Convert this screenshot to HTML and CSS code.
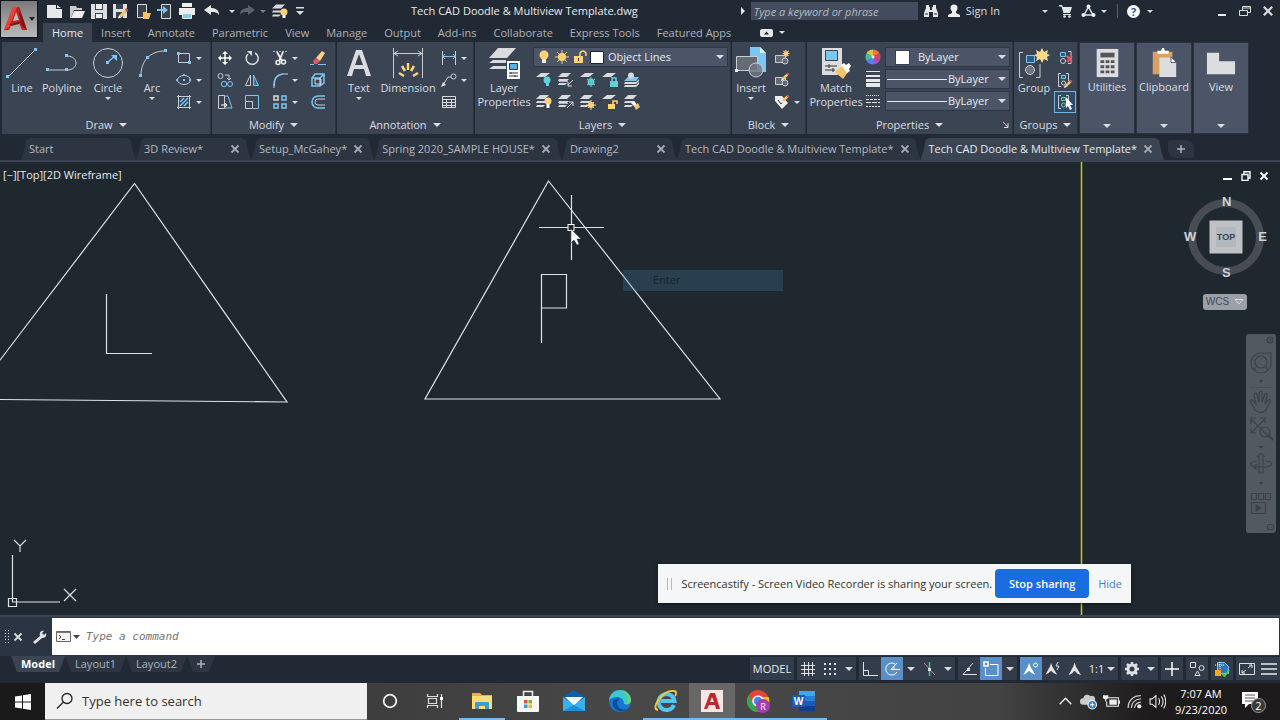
FILE: index.html
```html
<!DOCTYPE html>
<html lang="en">
<head>
<meta charset="utf-8">
<title>Tech CAD Doodle &amp; Multiview Template.dwg</title>
<link rel="stylesheet" href="styles.css">
</head>
<body>
<svg class="defs" aria-hidden="true">
  <symbol id="i-layers" viewBox="0 0 16 16"><path fill="#d8dadc" d="M4 1h9l-4 4H0zM1 7h10l-2 2H0zM1 11h8l-2 2H0z"/></symbol>
  <symbol id="i-x" viewBox="0 0 10 10"><path d="M1.500 1.500l7 7M8.500 1.500l-7 7" stroke="currentColor" stroke-width="1.800" fill="none"/></symbol>
  <symbol id="i-pencil" viewBox="0 0 10 10"><path fill="#f3c46b" d="M1 7l5-5 2 2-5 5z"/><path fill="#e05252" d="M6 2l1.500-1.500 2 2L8 4z"/><path fill="#fff" d="M1 7l2 2-3 1z"/></symbol>
  <symbol id="i-person" viewBox="0 0 32 32"><path d="M15 1l3 9 12 20-9-4-6-6-6 6-8 4L12 10z"/></symbol>
</svg>

<header class="titlebar">
  <button class="app-button" aria-label="Application menu">
    <svg width="24" height="28" viewBox="0 0 24 28"><path fill="#c4201f" d="M9 2h6l8 23h-5l-3-7H8l-3 7H0z"/><path fill="#e8423c" d="M9 2h4L5 22l-5 3z"/><path fill="#bcbdbf" d="M12 7l3 8-6 1z"/><path fill="#851414" d="M15 2l8 23-6-5zM5 19l13-3-3 3-8 2z"/></svg>
    <i class="caret dark"></i>
  </button>
  <nav class="quick" aria-label="Quick access">
    <button aria-label="New"><svg viewBox="0 0 16 16"><path fill="#e6e7e8" d="M1 2h9v4h6v9H1zM11 2l4 3h-4z"/></svg></button>
    <button aria-label="Open"><svg viewBox="0 0 16 16"><path fill="#c9cbcd" d="M1 3h6l1 2h5v2H5l-3 8H1z"/><path fill="#eee" d="M5 8h11l-3 7H2z"/></svg></button>
    <button aria-label="Save"><svg viewBox="0 0 16 16"><path fill="#dcdddf" d="M0 1h16v15H0z"/><path fill="#3a424d" d="M4 1h8v6H4zM4 10h8v6H4z"/><path fill="#eee" d="M5 1h6v5H5zM5 11h6v4H5z"/></svg></button>
    <button aria-label="Save as"><svg viewBox="0 0 16 16"><path fill="#dcdddf" d="M0 1h14v14H0z"/><path fill="#3a424d" d="M3 1h7v5H3zM3 9h7v6H3z"/><use href="#i-pencil" x="5" y="4" width="11" height="12"/></svg></button>
    <button aria-label="Open from web"><svg viewBox="0 0 16 16"><path fill="#3a424d" stroke="#ddd" d="M2.500 1.500h9v13h-9z"/><path fill="#f3c46b" d="M8 9h3l1 1h4l-2 6H8z"/></svg></button>
    <button aria-label="Save to web"><svg viewBox="0 0 16 16"><path fill="#3a424d" stroke="#ddd" d="M4.500 1.500h9v14h-9z"/><path fill="#7cc6f2" d="M0 6h6V3l5 4-5 4V8H0z"/></svg></button>
    <button aria-label="Plot"><svg viewBox="0 0 16 16"><path fill="#eee" d="M3 0h10v4H3zM0 5h16v7H0z"/><path fill="#8ac9f4" stroke="#eee" d="M3.500 10.500h9v5h-9z"/></svg></button>
    <button aria-label="Undo"><svg viewBox="0 0 16 16"><path fill="#e6e7e8" d="M0 7l7-5v3c5 0 8 2 8 7-2-3-4-3-8-3v3z"/></svg></button>
    <button class="narrow" aria-label="Undo list"><i class="caret"></i></button>
    <button aria-label="Redo"><svg viewBox="0 0 16 16"><path fill="#5a626c" d="M16 7L9 2v3c-5 0-8 2-8 7 2-3 4-3 8-3v3z"/></svg></button>
    <button class="narrow" aria-label="Redo list"><i class="caret dim"></i></button>
    <button aria-label="Layer state"><svg viewBox="0 0 16 16"><use href="#i-layers" width="16" height="17"/><circle cx="12" cy="9" r="3.500" fill="#ffd27a"/><path fill="#fff" d="M10.500 12h3v3h-3z"/></svg></button>
    <button aria-label="Customize"><svg viewBox="0 0 16 16"><path fill="#ddd" d="M4 4h8v1.500H4zM4 8h8l-4 4z"/></svg></button>
  </nav>
  <h1 class="doc-title">Tech CAD Doodle &amp; Multiview Template.dwg</h1>
  <div class="info">
    <i class="caret right"></i>
    <input class="keyword" type="text" placeholder="Type a keyword or phrase" aria-label="Type a keyword or phrase">
    <button aria-label="Search"><svg width="14" height="14" viewBox="0 0 14 14"><path fill="#e6e7e8" d="M2 1h3v2h1v3h2V3h1V1h3v3l2 5v4H9V8H5v5H0V9l2-5z"/><path stroke="#222a33" d="M1 10h3M10 10h3"/></svg></button>
    <button class="signin"><svg width="14" height="14" viewBox="0 0 14 14"><circle cx="7" cy="4" r="3.500" fill="#eee"/><path fill="#eee" d="M5 7h4v2l4 2v2H1v-2l4-2z"/></svg>Sign In</button>
    <button aria-label="Account list"><i class="caret"></i></button>
    <button aria-label="App Store"><svg width="14" height="14" viewBox="0 0 14 14"><path fill="#e6e7e8" d="M0 1h3l1 2h9l-2 6H4.500L2.500 2.500H0zM4 10h8v1H4z"/><circle cx="5.500" cy="12.500" r="1.300" fill="#eee"/><circle cx="10.500" cy="12.500" r="1.300" fill="#eee"/></svg></button>
    <button class="cloud" aria-label="Cloud"><svg width="15" height="14" viewBox="0 0 15 14"><path d="M7.500 3L3 11h9z" fill="none" stroke="#dfe2ea" stroke-width="1.500"/><circle cx="7.500" cy="2.500" r="2" fill="#eee"/><circle cx="2.500" cy="11" r="2" fill="#eee"/><circle cx="12.500" cy="11" r="2" fill="#eee"/></svg><i class="caret"></i></button>
    <button class="help" aria-label="Help"><b>?</b><i class="caret"></i></button>
  </div>
  <div class="window-buttons">
    <button aria-label="Minimize"><svg width="12" height="12" viewBox="0 0 12 12"><path d="M2 10h8" stroke="#eee" stroke-width="2"/></svg></button>
    <button aria-label="Restore"><svg width="12" height="12" viewBox="0 0 12 12"><path fill="none" stroke="#ddd" d="M.5 5.500h8v5h-8zM3.500 5V1.500h8v6H9M4 3h7"/></svg></button>
    <button aria-label="Close"><svg width="12" height="12"><use href="#i-x" width="12" height="12"/></svg></button>
  </div>
</header>

<nav class="ribbon-tabs">
  <button class="current">Home</button><button>Insert</button><button>Annotate</button><button>Parametric</button><button>View</button><button>Manage</button><button>Output</button><button>Add-ins</button><button>Collaborate</button><button>Express Tools</button><button>Featured Apps</button>
  <button class="min-ribbon" aria-label="Minimize ribbon"><svg width="13" height="8" viewBox="0 0 13 8"><rect width="13" height="8" rx="2" fill="#e6e7e8"/><path fill="#222" d="M4 5.500h5L6.500 2.500z"/></svg><i class="caret"></i></button>
</nav>

<main class="ribbon">
  <section class="panel draw">
    <div class="tools">
      <button class="big"><svg viewBox="0 0 32 32"><path d="M2 30L29 3" stroke="#c9cdd3"/><path fill="#7cc6f2" d="M0 28h3v3H0zM28 1h3v3h-3z"/></svg>Line</button>
      <button class="big"><svg viewBox="0 0 32 32"><path d="M2 23h19c12 0 12-14 0-14" fill="none" stroke="#c9cdd3"/><path fill="#7cc6f2" d="M0 21h3v3H0zM19 21h3v3h-3zM19 7h3v3h-3z"/></svg>Polyline</button>
      <button class="big"><svg viewBox="0 0 32 32"><circle cx="16" cy="16" r="14.500" fill="none" stroke="#c9cdd3"/><path fill="#7cc6f2" d="M14 14h3v3h-3zM19 8h6v6z"/><path d="M16 15l7-6" stroke="#7cc6f2" stroke-width="1.500"/></svg>Circle<i class="caret"></i></button>
      <button class="big"><svg viewBox="0 0 32 32"><path d="M5 28C5 14 14 4 29 4" fill="none" stroke="#c9cdd3"/><path fill="#7cc6f2" d="M3 27h3v3H3zM10 9h3v3h-3zM28 2h3v3h-3z"/></svg>Arc<i class="caret"></i></button>
      <div class="grid one">
        <button class="split" aria-label="Rectangle"><svg viewBox="0 0 16 16"><path d="M2.500 3.500h11v9h-11z" fill="none" stroke="#c9cdd3"/><path fill="#7cc6f2" d="M1 2h3v3H1zM12 11h3v3h-3z"/></svg><i class="caret"></i></button>
        <button class="split" aria-label="Ellipse"><svg viewBox="0 0 16 16"><ellipse cx="8" cy="8" rx="6.500" ry="4.500" fill="none" stroke="#c9cdd3"/><path fill="#7cc6f2" d="M7 7h2v2H7zM7 2h2v2H7zM13 7h2v2h-2zM0 7h2v2H0z"/></svg><i class="caret"></i></button>
        <button class="split" aria-label="Hatch"><svg viewBox="0 0 16 16"><path d="M2.500 1v14M13.500 1v14M1 2.500h14M1 13.500h14" stroke="#c9cdd3"/><path d="M4 8l4-4M4 12l8-8M8 12l4-4" stroke="#7cc6f2" stroke-width="1.500"/></svg><i class="caret"></i></button>
      </div>
    </div>
    <footer>Draw <i class="caret big-caret"></i></footer>
  </section>

  <section class="panel modify">
    <div class="tools">
      <div class="grid four">
        <button aria-label="Move"><svg viewBox="0 0 16 16"><path d="M8 3v10M3 8h10" stroke="#fff" stroke-width="1.500"/><path fill="#fff" d="M8 1l3 3H5zM8 15l3-3H5zM1 8l3-3v6zM15 8l-3-3v6z"/></svg></button>
        <button aria-label="Rotate"><svg viewBox="0 0 16 16"><path d="M11 3A6 6 0 1 1 4 4" fill="none" stroke="#d8dadc" stroke-width="1.500"/><path fill="#d8dadc" d="M3 1h5v5z"/></svg></button>
        <button class="split" aria-label="Trim"><svg viewBox="0 0 16 16"><path d="M1 1.500h14" stroke="#7cc6f2" stroke-dasharray="2 1"/><path d="M5 2l5 9M11 2L7 11" stroke="#eee" stroke-width="1.800"/><circle cx="6" cy="12.500" r="2" fill="none" stroke="#eee" stroke-width="1.500"/><circle cx="11.500" cy="12" r="2" fill="none" stroke="#eee" stroke-width="1.500"/></svg><i class="caret"></i></button>
        <button aria-label="Erase"><svg viewBox="0 0 16 16"><path fill="#ffd28c" d="M6 8l6-7 3 2-5 8z"/><path fill="#e05a68" d="M3 11l3-3 4 3-3 3H4z"/><path d="M0 14.500h4M8 14.500h8" stroke="#7cc6f2"/></svg></button>
        <button aria-label="Copy"><svg viewBox="0 0 16 16"><g fill="none" stroke="#c9cdd3"><circle cx="3.500" cy="4" r="2.500"/><path d="M8 3h4v5M10 6l2 2 2-2"/><g stroke="#7cc6f2"><circle cx="7" cy="12" r="2.700"/><circle cx="13" cy="12" r="2.500"/></g></g></svg></button>
        <button aria-label="Mirror"><svg viewBox="0 0 16 16"><path d="M6.500 3v10.500h-5z" fill="none" stroke="#c9cdd3"/><path d="M9.500 3v10.500h5z" fill="#2f6fa5" stroke="#7cc6f2"/></svg></button>
        <button class="split" aria-label="Fillet"><svg viewBox="0 0 16 16"><path d="M2 14C2 6 5 2.500 11 2" fill="none" stroke="#7cc6f2" stroke-width="1.500"/><path d="M11 2h5M2 12v4" stroke="#c9cdd3"/></svg><i class="caret"></i></button>
        <button aria-label="Explode"><svg viewBox="0 0 16 16"><path d="M2 6h8v8H2zM2 6l3-4h9v9l-4 3M10 6l4-4" fill="none" stroke="#7cc6f2" stroke-width="1.500"/><path d="M5 7h6v5H5z" fill="none" stroke="#ddd"/></svg></button>
        <button aria-label="Stretch"><svg viewBox="0 0 16 16"><path d="M1.500 1.500h6v13h-6z" fill="none" stroke="#c9cdd3"/><path d="M8 2h3l4 12H8" fill="none" stroke="#7cc6f2"/><path d="M4 11h6M8 9l2 2-2 2" fill="none" stroke="#fff"/></svg></button>
        <button aria-label="Scale"><svg viewBox="0 0 16 16"><path d="M1.500 7V1.500h13v13H9" fill="none" stroke="#7cc6f2"/><path d="M1.500 7.500h7v7h-7z" fill="none" stroke="#c9cdd3"/></svg></button>
        <button class="split" aria-label="Array"><svg viewBox="0 0 16 16"><g fill="none" stroke-width="1.500" stroke="#7cc6f2"><path d="M2 2h4v4H2z" stroke="#ddd"/><path d="M10 2h4v4h-4zM2 10h4v4H2zM10 10h4v4h-4z"/></g></svg><i class="caret"></i></button>
        <button aria-label="Offset"><svg viewBox="0 0 16 16"><path d="M15 2H8a6 6 0 0 0 0 12h7" fill="none" stroke="#7cc6f2" stroke-width="1.500"/><path d="M15 5H8a3 3 0 0 0 0 6h7" fill="none" stroke="#c9cdd3"/></svg></button>
      </div>
    </div>
    <footer>Modify <i class="caret big-caret"></i></footer>
  </section>

  <section class="panel annotation">
    <div class="tools">
      <button class="big"><svg viewBox="0 0 32 32"><path fill="#d9dbdf" fill-rule="evenodd" d="M13 3h6l9 26h-5l-2-7H11l-2 7H4zM12 18h8l-4-11z"/></svg>Text<i class="caret"></i></button>
      <button class="big"><svg viewBox="0 0 32 32"><path d="M1.500 1v30M30.500 1v30M3 6.500h26M6 4L2 6.500 6 9M26 4l4 2.500L26 9" fill="none" stroke="#c9cdd3"/><g stroke="#ffd27a" stroke-width="2.500"><path d="M7 26l5 3M10 19l3 5M16 16v7M22 19l-3 5M26 26l-5 3"/></g></svg>Dimension</button>
      <div class="grid one">
        <button class="split" aria-label="Linear"><svg viewBox="0 0 16 16"><path d="M1.500 1v14M14.500 1v14" stroke="#c9cdd3"/><path d="M2 6.500h12M4 4L2 6.500 4 9M12 4l2 2.500L12 9" fill="none" stroke="#7cc6f2"/></svg><i class="caret"></i></button>
        <button class="split" aria-label="Leader"><svg viewBox="0 0 16 16"><circle cx="12.500" cy="4.500" r="2.500" fill="none" stroke="#c9cdd3"/><path d="M10 5H7L2 13" fill="none" stroke="#c9cdd3"/><path fill="#ddd" d="M0 15l2-5 3 3z"/></svg><i class="caret"></i></button>
        <button aria-label="Table"><svg viewBox="0 0 16 16"><path d="M1.500 2.500h13v11h-13zM1 5.500h14M1 8.500h14M1 11.500h14M5.500 5v9M10.500 5v9" fill="none" stroke="#d8dadc"/></svg></button>
      </div>
    </div>
    <footer>Annotation <i class="caret big-caret"></i></footer>
  </section>

  <section class="panel layers">
    <div class="tools">
      <button class="big"><svg viewBox="0 0 32 32"><path fill="#d9dbdf" d="M10 1h18l-9 10H1zM5 13h13v3H1zM5 19h13v3H1z"/><path fill="#fff" d="M19 14h13v18H19z"/><path fill="#5aaee8" stroke="#334" d="M21.500 16.500h8v6h-8z"/><path stroke="#333" d="M21 26h9M21 29h9M23 25v2M27 28v2"/></svg>Layer<br>Properties</button>
      <div class="stack">
        <div class="combo layer-combo">
          <svg width="66" height="16" viewBox="0 0 66 16"><circle cx="7" cy="6" r="4.500" fill="#ffd27a"/><path fill="#eee" d="M5 10h4v4H5z"/><circle cx="25" cy="8" r="4" fill="#ffd27a"/><path d="M25 1v14M18 8h14M20 3l10 10M30 3L20 13" stroke="#ffd27a"/><path fill="#ffd27a" d="M37 7h9v7h-9z"/><path d="M43 8V4q3-4 6 0v3" fill="none" stroke="#ffd27a" stroke-width="1.500"/><path fill="#333" d="M41 9h1v3h-1z"/><path fill="#fff" stroke="#1e252e" d="M53.500 2.500h13v12h-13z"/></svg>
          <select aria-label="Layer"><option>Object Lines</option></select><i class="caret big-caret"></i>
        </div>
        <div class="layer-grid">
          <button aria-label="Off"><svg viewBox="0 0 16 16"><path fill="#d8dadc" d="M5 1h9l-5 4H0z"/><circle cx="11" cy="8" r="3.500" fill="#5fd3d8"/><path fill="#5fd3d8" d="M10 11h3v3h-3z"/></svg></button>
          <button aria-label="Isolate"><svg viewBox="0 0 16 16"><use href="#i-layers" width="16" height="16"/><path d="M1 9.500h9" stroke="#7cc6f2"/><path d="M15 8l-5 5M10 10v4h4" stroke="#ddd" fill="none"/></svg></button>
          <button aria-label="Freeze"><svg viewBox="0 0 16 16"><path fill="#d8dadc" d="M5 1h9l-5 4H0z"/><circle cx="11" cy="10" r="2.500" fill="none" stroke="#5fd3d8" stroke-width="2"/><path d="M11 5v10M7 7l8 6M15 7l-8 6" stroke="#5fd3d8"/></svg></button>
          <button aria-label="Lock"><svg viewBox="0 0 16 16"><path fill="#d8dadc" d="M5 1h9l-5 4H0z"/><path fill="#5fd3d8" d="M8 9h8v6H8z"/><path d="M10 9V6h4v3" fill="none" stroke="#5fd3d8" stroke-width="1.500"/></svg></button>
          <button aria-label="Make current"><svg viewBox="0 0 16 16"><path fill="#7cc6f2" d="M4 5h11l-3 4H0z"/><circle cx="7" cy="3.500" r="3" fill="#d8dadc"/><path fill="#d8dadc" d="M1 10h11l3-3v2l-3 3H0zM1 13h11l3-3v2l-3 3H0z"/></svg></button>
          <button aria-label="All on"><svg viewBox="0 0 16 16"><use href="#i-layers" width="16" height="16"/><circle cx="12" cy="7" r="3.500" fill="#ffd27a"/><path fill="#fff" d="M10.500 10h3v4h-3z"/></svg></button>
          <button aria-label="Unisolate"><svg viewBox="0 0 16 16"><use href="#i-layers" width="16" height="16"/><path d="M1 9.500h9" stroke="#7cc6f2"/><path d="M9 14l6-6M11 8h4v4" stroke="#ddd" fill="none"/></svg></button>
          <button aria-label="Thaw"><svg viewBox="0 0 16 16"><use href="#i-layers" width="16" height="16"/><circle cx="11" cy="11" r="3" fill="#ffd27a"/><path d="M11 6v10M6 11h10M8 8l6 6M14 8l-6 6" stroke="#ffd27a"/></svg></button>
          <button aria-label="Unlock"><svg viewBox="0 0 16 16"><path fill="#d8dadc" d="M5 1h9l-5 4H0z"/><path fill="#ffd27a" d="M6 10h7v5H6z"/><path d="M11 10V7h4v3" fill="none" stroke="#ffd27a" stroke-width="1.500"/></svg></button>
          <button aria-label="Match layer"><svg viewBox="0 0 16 16"><use href="#i-layers" width="16" height="16"/><path fill="#fff" d="M7 9l3-2 4 5-2 2z"/><path fill="#f3c46b" d="M10 12l4-3 2 4-4 3z"/></svg></button>
        </div>
      </div>
    </div>
    <footer>Layers <i class="caret big-caret"></i></footer>
  </section>

  <section class="panel block">
    <div class="tools">
      <button class="big"><svg viewBox="0 0 32 32"><path fill="#7cc6f2" d="M15 0h10l6 6v19H15z"/><path fill="#d7efff" d="M25 0l6 6h-6z"/><path fill="#656b75" stroke="#c9cdd3" d="M1.500 9.500h21v14h-21z"/><circle cx="21" cy="23" r="7" fill="#707884" fill-opacity=".8" stroke="#c9cdd3"/><path fill="#eee" d="M0 22h3v3H0z"/></svg>Insert<i class="caret"></i></button>
      <div class="grid one">
        <button aria-label="Create block"><svg viewBox="0 0 16 16"><path fill="#656b75" stroke="#c9cdd3" d="M1.500 5.500h10v7h-10z"/><circle cx="11" cy="11" r="3" fill="#656b75" stroke="#c9cdd3"/><path d="M12 0v7M8.500 3.500h7M9.500 1l5 5M14.500 1l-5 5" stroke="#ffd27a" stroke-width="1.200"/></svg></button>
        <button aria-label="Edit block"><svg viewBox="0 0 16 16"><path fill="#656b75" stroke="#c9cdd3" d="M1.500 5.500h10v7h-10z"/><circle cx="11" cy="11" r="3" fill="#656b75" stroke="#c9cdd3"/><use href="#i-pencil" x="7" y="0" width="9" height="9"/></svg></button>
        <button class="split" aria-label="Edit attributes"><svg viewBox="0 0 16 16"><path fill="#eee" d="M1 2h7l6 7-6 6-7-8z"/><path d="M4 6l3 4 2-3" stroke="#333" fill="none"/><use href="#i-pencil" x="7" y="0" width="9" height="9"/></svg><i class="caret"></i></button>
      </div>
    </div>
    <footer>Block <i class="caret big-caret"></i></footer>
  </section>

  <section class="panel properties">
    <div class="tools">
      <button class="big"><svg viewBox="0 0 32 32"><path fill="#dcdddf" d="M2 1h20v27H2z"/><path fill="#7cc6f2" stroke="#3b4453" d="M5.500 3.500h12v10h-12z"/><path d="M5 19h12M5 23h10M9 17v4M13 21v4" stroke="#333"/><path fill="#f3c46b" d="M15 25l7-6 6 6-5 7z"/><path fill="#fff" d="M21 18l3-2 2 2 3-2 2 3-2 3 1 2-3 2z"/></svg>Match<br>Properties</button>
      <div class="prop-rows">
        <svg width="16" height="16" viewBox="0 0 16 16"><path fill="#f0763f" d="M8 8V0.500a7.500 7.500 0 0 1 6.500 3.750z"/><path fill="#d9455f" d="M8 8l6.500-3.750a7.500 7.500 0 0 1 0 7.500z"/><path fill="#a94fd0" d="M8 8l6.500 3.750A7.500 7.500 0 0 1 8 15.500z"/><path fill="#5b7ff0" d="M8 8v7.500a7.500 7.500 0 0 1-6.500-3.750z"/><path fill="#3fc0a0" d="M8 8l-6.500 3.750a7.500 7.500 0 0 1 0-7.500z"/><path fill="#d2c648" d="M8 8L1.500 4.250A7.500 7.500 0 0 1 8 .5z"/><circle cx="8" cy="8" r="1.500" fill="#eee"/></svg>
        <div class="combo"><span class="swatch"></span><select class="color" aria-label="Object color"><option>ByLayer</option></select><i class="caret big-caret"></i></div>
        <svg width="16" height="16" viewBox="0 0 16 16"><path fill="#e6e7e8" d="M1 0h14v1H1zM1 4h14v2H1zM1 8h14v3H1zM1 12h14v4H1z"/></svg>
        <div class="combo"><span class="line"></span><select aria-label="Lineweight"><option>ByLayer</option></select><i class="caret big-caret"></i></div>
        <svg width="16" height="16" viewBox="0 0 16 16"><g stroke="#e6e7e8"><path d="M1 2.500h14" stroke-dasharray="1 1"/><path d="M1 6.500h14" stroke-dasharray="3 1"/><path d="M1 9.500h14" stroke-dasharray="5 1"/><path d="M1 13.500h14" stroke-dasharray="2 1"/></g></svg>
        <div class="combo"><span class="line"></span><select aria-label="Linetype"><option>ByLayer</option></select><i class="caret big-caret"></i></div>
      </div>
    </div>
    <footer>Properties <i class="caret big-caret"></i><svg class="launcher" width="8" height="8" viewBox="0 0 8 8"><path d="M1 1l5 5M6 2v4.500H2" stroke="#ddd" fill="none"/></svg></footer>
  </section>

  <section class="panel groups">
    <div class="tools">
      <button class="big"><svg viewBox="0 0 32 32"><path d="M5 5.500H1.500v25H5M18 30.500h4V17" fill="none" stroke="#c9cdd3"/><path fill="#2f5b80" stroke="#7cc6f2" d="M8.500 8.500h8v7h-8z"/><circle cx="12" cy="23" r="4.500" fill="#70757e" stroke="#c9cdd3"/><path fill="#ffd98a" d="M24 1l2 4 4-2-1 4 3 1-3 2 1 4-4-2-2 4-2-4-4 2 1-4-3-2 3-1-1-4 4 2z"/></svg>Group</button>
      <div class="grid one">
        <button aria-label="Ungroup"><svg viewBox="0 0 16 16"><path d="M11 1.500h3v12h-3" fill="none" stroke="#c9cdd3"/><path fill="#2f5b80" stroke="#7cc6f2" d="M3.500 2.500h5v4h-5z"/><circle cx="6" cy="11" r="2.500" fill="none" stroke="#c9cdd3"/><path d="M10 6l5 6M15 6l-5 6" stroke="#ee5560" stroke-width="2"/></svg></button>
        <button aria-label="Group edit"><svg viewBox="0 0 16 16"><path d="M4 1.500H1.500v13H4M9 1.500h2.500V9" fill="none" stroke="#c9cdd3"/><path fill="#2f5b80" stroke="#7cc6f2" d="M4.500 3.500h4v3h-4z"/><circle cx="6.500" cy="11" r="2" fill="none" stroke="#c9cdd3"/><use href="#i-pencil" x="7" y="7" width="9" height="9"/></svg></button>
        <button class="active" aria-label="Group selection"><svg viewBox="0 0 16 16"><path d="M4 1.500H1.500v13H4M9 1.500h2.500V9" fill="none" stroke="#c9cdd3"/><path fill="#2a6b50" stroke="#5fd39a" d="M4.500 3.500h4v3h-4z"/><circle cx="6.500" cy="11" r="2" fill="none" stroke="#5fd39a"/><path fill="#fff" d="M9 3v11l2-2 2 4 2-1-2-4h3z"/></svg></button>
      </div>
    </div>
    <footer>Groups <i class="caret big-caret"></i></footer>
  </section>

  <button class="collapsed"><svg viewBox="0 0 32 32"><path fill="#dcdddf" d="M5 1h23v30H5z"/><path fill="#555" d="M9 5h15v5H9z"/><g fill="#555"><path d="M9 13h4v3H9zM14.500 13h4v3h-4zM20 13h4v3h-4zM9 18.500h4v3H9zM14.500 18.500h4v3h-4zM20 18.500h4v3h-4zM9 24h4v3H9zM14.500 24h4v3h-4zM20 24h4v3h-4z"/></g></svg>Utilities<i class="caret big-caret"></i></button>
  <button class="collapsed"><svg viewBox="0 0 32 32"><path fill="#d9a05f" d="M4 4h21v24H4z"/><path fill="#fff" d="M9 3h4l1-3h2l1 3h4v3H9z"/><path fill="#dcdddf" d="M11 10h12l6 6v15H11z"/><path fill="#fff" stroke="#4b5567" d="M23.500 9.500v6h6z"/></svg>Clipboard<i class="caret big-caret"></i></button>
  <button class="collapsed"><svg viewBox="0 0 32 32"><path fill="#dcdddf" d="M1 5h13v9h17v14H1z"/></svg>View<i class="caret big-caret"></i></button>
</main>

<nav class="doc-tabs">
  <div class="doc-tab first"><button>Start</button></div>
  <div class="doc-tab"><button>3D Review*</button><button class="close" aria-label="Close"><svg><use href="#i-x"/></svg></button></div>
  <div class="doc-tab"><button>Setup_McGahey*</button><button class="close" aria-label="Close"><svg><use href="#i-x"/></svg></button></div>
  <div class="doc-tab"><button>Spring 2020_SAMPLE HOUSE*</button><button class="close" aria-label="Close"><svg><use href="#i-x"/></svg></button></div>
  <div class="doc-tab"><button>Drawing2</button><button class="close" aria-label="Close"><svg><use href="#i-x"/></svg></button></div>
  <div class="doc-tab"><button>Tech CAD Doodle &amp; Multiview Template*</button><button class="close" aria-label="Close"><svg><use href="#i-x"/></svg></button></div>
  <div class="doc-tab current"><button>Tech CAD Doodle &amp; Multiview Template*</button><button class="close" aria-label="Close"><svg><use href="#i-x"/></svg></button></div>
  <button class="add-tab" aria-label="New tab"><svg width="10" height="10"><path d="M5 1v8M1 5h8" stroke="#aab0b8" stroke-width="1.500"/></svg></button>
</nav>

<section class="canvas">
  <svg class="drawing" width="100%" height="100%">
    <g fill="none" stroke="#dfe2e5" stroke-width="1.200">
      <path d="M-6 206L134.500 21.500 287 240 0 237.500M106.500 132v59.500H152"/>
      <path d="M548.500 19L425 237h295zM541.500 181v-68.500h25v33.500h-25"/>
      <path d="M539 65.500h65M571.500 33v65"/>
    </g>
    <path d="M1081.500 0v460" stroke="#c8c814" stroke-width="1.500"/>
    <rect x="568" y="62.500" width="6" height="6" fill="#20272e" stroke="#fff"/>
  </svg>
  <div class="view-label">[−][Top][2D Wireframe]</div>
  <div class="ghost-menu">Enter</div>
  <svg class="cursor" width="12" height="17" viewBox="0 0 12 17"><path fill="#fff" stroke="#333" stroke-width=".5" d="M1 0v14l3-3 3 5 2-1-2-5h4z"/></svg>
  <svg class="ucs" width="80" height="76" viewBox="0 0 80 76"><path fill="none" stroke="#dfe2e5" stroke-width="1.200" d="M12.500 20v47H60M8.500 63.500h8v8h-8zM14 5l6 6 6-6M20 11v6M64 54l12 12M76 54L64 66"/></svg>
  <div class="view-controls">
    <button aria-label="Minimize view"><svg width="10" height="10"><path d="M0 8h9" stroke="#fff" stroke-width="2"/></svg></button>
    <button aria-label="Restore view"><svg width="10" height="10"><path d="M1 3.500h6v6H1zM3 3V.8h6V7H7" fill="none" stroke="#fff" stroke-width="1.400"/></svg></button>
    <button aria-label="Close view"><svg width="10" height="10"><use href="#i-x"/></svg></button>
  </div>
  <div class="viewcube">
    <svg width="84" height="84" viewBox="0 0 84 84"><circle cx="42" cy="42" r="34" fill="none" stroke="#474c55" stroke-width="8"/><path fill="#bfc1c5" d="M25.500 25.500h33v33h-33z"/><path fill="#b2b8c0" d="M32 32h20v20H32z"/></svg>
    <span class="n">N</span><span class="w">W</span><span class="e">E</span><span class="s">S</span><button class="top">TOP</button>
  </div>
  <button class="wcs">WCS <svg width="10" height="6" viewBox="0 0 10 6"><path d="M1 .5h8L5 5z" fill="none" stroke="#d6d8dc"/></svg></button>
  <svg class="navbar" width="30" height="199" viewBox="0 0 30 199">
    <rect width="30" height="199" rx="3" fill="#535a5f"/>
    <g fill="none" stroke="#3b4248" stroke-width="1.200">
      <circle cx="24" cy="6" r="3"/><path d="M22.500 4.500l3 3M25.500 4.500l-3 3"/>
      <path d="M25 20v9a10 10 0 1 1-10-10h10z"/><circle cx="15" cy="28" r="6"/><path d="M11 32l-3 4M19 32l3 4"/>
      <path d="M9 76c-2-6-6-8-4-10 2-1 4 3 5 4l-2-9c1-3 3-2 3 0l2 7V59c1-2 3-2 3 0v9l3-8c2-1 3 0 2 2l-2 8 3-4c2-1 3 0 2 2l-4 8q-5 5-11 0z"/>
      <path d="M5 85l18 18M19 85L5 99M5 90v-6h5M14 84h5v5M5 94v5h5"/><circle cx="19" cy="98" r="5"/><path d="M22 101l5 5" stroke-width="2.500"/>
      <path d="M13 139v-18l-2 2 4-4 4 4-2-2v18zM11 127c-8 1-9 5 0 6h10c8-2 5-6-2-6M11 130l-3 3 3 3"/>
      <path d="M5.500 159.500h5v6h-5zM12.500 159.500h5v6h-5zM19.500 159.500h5v6h-5zM5.500 168.500h14v11h-14z"/><path d="M10 171v6l5-3z" fill="#3b4248"/>
      <rect x="21.500" y="190.500" width="6" height="5" rx="2"/><path d="M23 193h3M4 53.500h22" stroke="#485056"/>
    </g>
    <path fill="#343b41" d="M13 46h4l-2 3zM13 112h4l-2 3zM13 148h4l-2 3z"/>
  </svg>
  <div class="share">
    <i class="grip"></i>
    <p>Screencastify - Screen Video Recorder is sharing your screen.</p>
    <button>Stop sharing</button>
    <a href="#hide">Hide</a>
  </div>
</section>

<section class="command">
  <i class="dots"></i>
  <button aria-label="Close command line"><svg width="10" height="10"><use href="#i-x"/></svg></button>
  <button aria-label="Customize"><svg width="14" height="14" viewBox="0 0 14 14"><path fill="#dfe1e4" d="M0 12l7-6c-1-3 1-6 4-5L9 3l2 2 2-2c1 3-1 5-4 5l-7 6z"/></svg></button>
  <div class="command-box">
    <svg width="24" height="12" viewBox="0 0 24 12"><path fill="#f4f4f4" stroke="#666" d="M.5.500h14v10H.5z"/><path stroke="#777" d="M0 1.500h15"/><path d="M3 4l2 2-2 2M6 8.500h3" fill="none" stroke="#444"/><path fill="#444" d="M17 4h7l-3.500 4z"/></svg>
    <input type="text" placeholder="Type a command" aria-label="Command">
  </div>
</section>

<footer class="statusbar">
  <nav class="layouts">
    <button class="current">Model</button><button>Layout1</button><button>Layout2</button><button class="plus" aria-label="New layout"><svg width="10" height="10"><path d="M5 1v8M1 5h8" stroke="#aab0b8" stroke-width="1.500"/></svg></button>
  </nav>
  <div class="modes">
    <div><button class="text">MODEL</button></div>
    <div><button aria-label="Grid"><svg viewBox="0 0 16 16"><path d="M4.500 1v14M8.500 1v14M12.500 1v14M1 4.500h14M1 8.500h14M1 12.500h14" stroke="#dfe1e4"/></svg></button><button aria-label="Snap"><svg viewBox="0 0 16 16"><g stroke="#dfe1e4" stroke-width="2" stroke-dasharray="2 3"><path d="M2 3h12M2 8h12M2 13h12"/></g></svg></button><button class="narrow" aria-label="Snap list"><i class="caret big-caret"></i></button></div>
    <div><button aria-label="Ortho"><svg viewBox="0 0 16 16"><path d="M1.500 1v13.500H16M1.500 9.500h5v5" fill="none" stroke="#dfe1e4"/></svg></button><button class="on" aria-label="Polar"><svg viewBox="0 0 16 16"><path d="M13 11A6 6 0 1 1 11 3M7 8.500h9M7 8.500L13 2M10 5.500v3" fill="none" stroke="#fff"/></svg></button><button class="narrow" aria-label="Polar list"><i class="caret big-caret"></i></button><button aria-label="Isodraft"><svg viewBox="0 0 16 16"><path d="M3 2l11 12" stroke="#d87890"/><path d="M8.500 1v14" stroke="#56b98a" stroke-width="1.500"/><path fill="#ddd" d="M7 7h3v3H7z"/></svg></button><button class="narrow" aria-label="Isodraft list"><i class="caret big-caret"></i></button></div>
    <div><button aria-label="Tracking"><svg viewBox="0 0 16 16"><path d="M12 2L2 13.500h14" fill="none" stroke="#dfe1e4"/><path fill="#dfe1e4" d="M6 7h3v3H6z"/></svg></button><button class="on" aria-label="Object snap"><svg viewBox="0 0 16 16"><path d="M7 3.500h8v11H2.500V7" fill="none" stroke="#fff"/><path d="M1 1h4v4H1z" fill="none" stroke="#fff" stroke-width="1.500"/></svg></button><button class="narrow" aria-label="Object snap list"><i class="caret big-caret"></i></button></div>
    <div><button class="on" aria-label="Annotation visibility"><svg viewBox="0 0 16 16"><use href="#i-person" width="13" height="16" fill="#fff"/><circle cx="12.500" cy="4" r="2" fill="none" stroke="#fff"/></svg></button><button aria-label="Auto scale"><svg viewBox="0 0 16 16"><use href="#i-person" width="13" height="16" fill="#dfe1e4"/><path d="M13 1l-2 4h3l-2 4" stroke="#dfe1e4" fill="none"/></svg></button><button aria-label="Annotation scale"><svg viewBox="0 0 16 16"><use href="#i-person" x="1" width="14" height="16" fill="#dfe1e4"/></svg></button><button class="text scale">1:1<i class="caret big-caret"></i></button></div>
    <div><button aria-label="Workspace"><svg viewBox="0 0 16 16"><circle cx="8" cy="8" r="4" fill="none" stroke="#dfe1e4" stroke-width="3"/><path d="M8 1v2M8 13v2M1 8h2M13 8h2M3 3l2 2M11 11l2 2M13 3l-2 2M5 11l-2 2" stroke="#dfe1e4" stroke-width="2.500"/></svg></button><button class="narrow" aria-label="Workspace list"><i class="caret big-caret"></i></button></div>
    <div><button aria-label="Monitor"><svg viewBox="0 0 16 16"><path d="M8 1v14M1 8h14" stroke="#fff" stroke-width="1.500"/></svg></button></div>
    <div><button aria-label="Isolate"><svg viewBox="0 0 16 16"><path d="M1.500 1.500h5v5h-5zM6 14.500l2.500-4.500 2.500 4.500z" fill="none" stroke="#dfe1e4"/><circle cx="12.500" cy="7" r="2.500" fill="none" stroke="#dfe1e4"/></svg></button></div>
    <div><button aria-label="Performance"><svg viewBox="0 0 16 16"><path fill="#2f76b8" stroke="#8ec5ef" d="M3.500 1.500h7l4 4v7h-11z"/><path d="M1 4h9M6 1v9" stroke="#fff" stroke-dasharray="1 1"/><path fill="#f0a830" d="M1 9h6v6H1z"/><path d="M8 12l2.500 3L15 9" stroke="#5cc25a" stroke-width="2" fill="none"/></svg></button></div>
    <div><button aria-label="Clean screen"><svg viewBox="0 0 16 16"><path d="M.5 2.500h15v11H.5zM9 7l4-3M10 4h3v3M7 9l-4 3M3 9v3h3" fill="none" stroke="#dfe1e4"/></svg></button><button aria-label="Customization"><svg viewBox="0 0 16 16"><path d="M0 3h16M0 8h16M0 13h16" stroke="#e8eaec" stroke-width="1.500"/></svg></button></div>
  </div>
</footer>

<footer class="taskbar">
  <button class="start" aria-label="Start"><svg width="16" height="16" viewBox="0 0 16 16"><path fill="#fff" d="M0 2.500l7-1v6H0zM8 1.300L16 0v7.500H8zM0 8.500h7v6l-7-1zM8 8.500h8V16l-8-1.300z"/></svg></button>
  <label class="search"><svg width="18" height="18" viewBox="0 0 18 18"><circle cx="11" cy="6.500" r="5" fill="none" stroke="#222" stroke-width="1.300"/><path d="M7.500 10L1 16.500" stroke="#222" stroke-width="1.300"/></svg><input type="text" placeholder="Type here to search" aria-label="Type here to search"></label>
  <nav class="apps">
    <button aria-label="Cortana"><svg viewBox="0 0 24 24"><circle cx="12" cy="12" r="6.300" fill="none" stroke="#eee" stroke-width="1.800"/></svg></button>
    <button aria-label="Task view"><svg viewBox="0 0 24 24"><path d="M3.500 5v2.500h10V5M3.500 19v-2.500h10V19M4.500 9.500h8v5h-8zM17.500 5v14" fill="none" stroke="#ddd" stroke-width="1.200"/><path fill="#fff" d="M16 8h3v3h-3z"/></svg></button>
    <button class="running" aria-label="File Explorer"><svg viewBox="0 0 24 24"><path fill="#e9b03b" d="M2 4h8l2 2h10v5H2z"/><path fill="#fbdc7b" d="M2 7h20v13H2z"/><path fill="#3f9ad8" d="M5 20v-6q0-1 1-1h12q1 0 1 1v6h-4v-3H9v3z"/></svg></button>
    <button aria-label="Microsoft Store"><svg viewBox="0 0 24 24"><path d="M7.500 8V2.500h9V8" fill="none" stroke="#eee" stroke-width="1.500"/><path fill="#f7f7f7" d="M1 7h22v15q0 1-1 1H2q-1 0-1-1z"/><path fill="#e5502f" d="M8 11h3.500v3.500H8z"/><path fill="#7bb82b" d="M12.500 11H16v3.500h-3.500z"/><path fill="#2aa3e8" d="M8 15.500h3.500V19H8z"/><path fill="#f7b61c" d="M12.500 15.500H16V19h-3.500z"/></svg></button>
    <button aria-label="Mail"><svg viewBox="0 0 24 24"><path fill="#0f5fae" d="M1 8l11-7 11 7-11 8z"/><path fill="#f4f9fd" d="M3 8h18l-9 9z"/><path fill="#35b3f0" d="M1 8l11 8 11-8v14H1z"/><path fill="#1c8fdc" d="M12 16l11 6H1z"/></svg></button>
    <button aria-label="Edge"><svg viewBox="0 0 24 24"><circle cx="12" cy="12" r="11" fill="#1577cf"/><path fill="#3dc7cf" d="M1 11C2 4 7 1 12 1c7 0 11 5 11 10 0 4-4 5-7 4 0-8-9-9-15-4z"/><path fill="#6bd26b" d="M14 1.500c6 1 9 6 9 10 0 2-2 4-5 4 3-5 1-10-4-14z"/><path fill="#0c4d9c" d="M9 13c0 8 8 9 12 6-4 6-18 4-16-7 1-3 4-3 6-2z"/></svg></button>
    <button class="running" aria-label="Internet Explorer"><svg viewBox="0 0 24 24"><path d="M20 16a8 8 0 1 1 .5-4H7" fill="none" stroke="#53c4f3" stroke-width="4"/><path d="M4 21c-8-1 4-20 16-19 3 0 2 4 1 5" fill="none" stroke="#f6cc35" stroke-width="1.800"/></svg></button>
    <button class="running focused" aria-label="AutoCAD"><svg viewBox="0 0 24 24"><path fill="#f6e6e4" d="M1 1h22v22H1z"/><path fill="#c0262c" fill-rule="evenodd" d="M10 4h5l5 16h-4l-1-4H9l-2 4H4zM12 8l-2 5h4z"/></svg></button>
    <button class="running" aria-label="Chrome"><svg viewBox="0 0 24 24"><circle cx="12" cy="12" r="11" fill="#e84335"/><path fill="#34a853" d="M2.500 6.500L8 15l5 8A11 11 0 0 1 2.500 6.500z"/><path fill="#fbc116" d="M12 8h10.500A11 11 0 0 1 13 23z"/><circle cx="12" cy="12" r="5" fill="#4285f4" stroke="#fff" stroke-width="1.500"/><circle cx="17" cy="17" r="7" fill="#a63cb3"/><text x="17" y="20.500" text-anchor="middle" font-size="9" fill="#fff">R</text></svg></button>
    <button class="running" aria-label="Word"><svg viewBox="0 0 24 24"><path fill="#41a5ee" d="M7 2h16v6H7z"/><path fill="#2b7cd3" d="M7 7h16v6H7z"/><path fill="#185abd" d="M7 12h16v5H7z"/><path fill="#103f91" d="M7 17h16v5H7z"/><path fill="#185abd" d="M0 6h13v12H0z"/><text x="6.500" y="16" text-anchor="middle" font-size="10" font-weight="700" fill="#fff">W</text></svg></button>
  </nav>
  <div class="tray">
    <button aria-label="Show hidden icons"><svg viewBox="0 0 16 16"><path d="M2.500 10.500L8 5l5.500 5.500" fill="none" stroke="#eee" stroke-width="1.300"/></svg></button>
    <button aria-label="OneDrive"><svg viewBox="0 0 16 16"><path fill="#c9cbcd" d="M3 11a3 3 0 0 1 0-6 4 4 0 0 1 7-2 3 3 0 0 1 4 4l-3 4z"/><circle cx="11.500" cy="11" r="4" fill="#2f82c8" stroke="#fff"/><path d="M9.500 11h4M11.500 9v4" stroke="#fff"/></svg></button>
    <button aria-label="Battery"><svg viewBox="0 0 16 16"><path d="M4.500 4.500h10v8h-11V8" fill="none" stroke="#eee"/><path fill="#eee" d="M6 6h7v5H6zM15 7h1v3h-1zM0 2h5v3l-2 1v2H2V6L0 5z"/></svg></button>
    <button aria-label="Network"><svg viewBox="0 0 16 16"><g fill="none" stroke="#c9cbcd" stroke-width="1.200"><path d="M2 14C2 7 7 2.500 14 2.500"/><path d="M5 14c0-5 4-8.500 9-8.500M8 14c0-3 3-5.500 6-5.500"/></g><circle cx="12.500" cy="12.500" r="2" fill="#eee"/></svg></button>
    <button aria-label="Volume"><svg viewBox="0 0 16 16"><path d="M1 5.500h2l3.500-3v11l-3.500-3H1zM9 5q2 3 0 6M11.500 3q3.500 5 0 10M13.800 1.500q4 6.500 0 13" fill="none" stroke="#eee"/></svg></button>
  </div>
  <button class="clock">7:07 AM<br>9/23/2020</button>
  <button class="notify" aria-label="2 notifications"><svg width="28" height="24" viewBox="0 0 28 24"><path fill="#fff" d="M1 2h16v12H8l-4 4v-4H1z"/><path d="M4 5h10M4 8h10M4 11h8" stroke="#555"/><circle cx="17.500" cy="15.500" r="7" fill="#393939" stroke="#9a9a9a"/><text x="17.500" y="19.500" text-anchor="middle" font-size="11" fill="#fff">2</text></svg></button>
</footer>
</body>
</html>
```

FILE: styles.css
```css
* { box-sizing: border-box; }
body {
  margin: 0;
  min-height: 100vh;
  display: flex;
  flex-direction: column;
  background: #212a34;
  color: #d9dce0;
  font: 11px/16px "Open Sans", "Noto Sans", sans-serif;
  overflow-x: hidden;
}
button, input, select { font: inherit; color: inherit; border: 0; margin: 0; padding: 0; background: none; }
button { display: flex; align-items: center; justify-content: center; white-space: nowrap; }
input { min-width: 0; outline: 0; }
select { appearance: none; outline: 0; }
svg { display: block; flex: none; }
.defs { position: absolute; width: 0; height: 0; }

.caret {
  flex: none;
  width: 0;
  height: 0;
  border: 3px solid transparent;
  border-top: 3px solid #d9dce0;
  border-bottom: 0;
}
.caret.dark { border-top-color: #222; border-width: 4px 3px 0; }
.caret.dim { border-top-color: #7b828b; }
.caret.right { border-width: 4px 0 4px 4px; border-color: transparent transparent transparent #e6e7e8; border-style: solid; }
.caret.big-caret { border-width: 4px 4px 0; }

/* Title bar */
.titlebar { display: flex; align-items: center; height: 22px; }
.app-button {
  position: relative;
  z-index: 1;
  align-self: flex-start;
  flex: none;
  width: 38px;
  height: 38px;
  gap: 1px;
  background: linear-gradient(#77797b, #b9babc);
  border: 1px solid #101418;
}
.quick { display: flex; align-items: center; padding-left: 4px; }
.quick button { width: 24px; height: 20px; }
.quick button:nth-child(n+2):nth-child(-n+7) { width: 22px; }
.quick button:nth-child(8) { width: 28px; }
.quick .narrow { width: 11px; }
.quick svg { width: 16px; height: 16px; }
.quick button:nth-child(10) { width: 20px; }
.quick button:last-child { width: 16px; }
.doc-title { flex: 1; margin: 0; text-align: center; font-size: 11px; font-weight: 400; color: #e8eaec; }
.info { display: flex; align-items: center; }
.info > .caret { margin-right: 6px; }
.keyword { width: 167px; height: 18px; padding-left: 3px; background: #434c5d; font-style: italic; }
.keyword::placeholder { color: #b4b9c1; opacity: 1; }
.info button { margin-left: 6px; }
.info .signin { gap: 5px; margin-left: 9px; }
.info .signin + button { margin-left: 42px; }
.info .signin + button + button { margin-left: 11px; }
.info .cloud { gap: 5px; margin-left: 8px; padding-right: 10px; border-right: 1px solid #59616b; }
.info .help { gap: 7px; margin-left: 9px; }
.help b { width: 13px; height: 13px; border-radius: 50%; background: #fff; color: #2456a8; line-height: 13px; }
.window-buttons { display: flex; gap: 11px; padding: 0 6px 0 63px; }

/* Ribbon */
.ribbon-tabs { display: flex; gap: 1px; height: 20px; padding: 1px 0 0 43px; color: #aeb3ba; }
.ribbon-tabs button { padding: 0 8px; }
.ribbon-tabs .current { padding: 0 9px; background: #3b4453; color: #e8eaec; }
.ribbon-tabs .min-ribbon { gap: 6px; padding: 0 20px; }
.ribbon { display: flex; gap: 1px; height: 92px; padding-left: 2px; }
.panel { display: flex; flex-direction: column; flex: none; background: #3b4453; border-right: 1px solid #2b3340; }
.tools { display: flex; flex: 1; padding-top: 5px; }
.big { flex-direction: column; justify-content: flex-start; line-height: 14px; }
.big svg { width: 32px; height: 32px; margin-bottom: 2px; }
.big .caret { margin-top: 2px; }
.panel footer { position: relative; display: flex; align-items: center; justify-content: center; gap: 6px; height: 19px; }
.grid { display: grid; grid-auto-rows: 22px; align-content: start; }
.grid button { width: 28px; }
.grid svg, .layer-grid svg { width: 16px; height: 16px; }
.grid .split { width: 38px; gap: 4px; padding-left: 6px; justify-content: flex-start; }
.grid.four { grid-template-columns: 26px 28px 38px 28px; }
.four button:nth-child(4n+1) { width: 26px; }
.draw { width: 209px; }
.draw .big { width: 40px; }
.draw .big:nth-child(3) { width: 52px; }
.draw .big:nth-child(4) { width: 36px; }
.modify { width: 124px; }
.annotation { width: 137px; }
.annotation .big { width: 44px; }
.annotation .big + .big { width: 54px; }
.layers { width: 256px; }
.layers .big, .properties .big { width: 58px; }
.stack { flex: 1; padding-right: 2px; }
.combo { display: flex; align-items: center; flex: 1; min-width: 0; height: 20px; padding: 0 3px; background: #4b5567; border: 1px solid #2e3644; color: #e8eaec; }
.combo select { flex: 1; min-width: 0; }
.layer-combo svg { margin-right: 5px; overflow: visible; }
.layer-grid { display: grid; grid-template-columns: repeat(5, 22px); grid-auto-rows: 22px; padding-top: 2px; }
.block { width: 74px; }
.block .big { width: 38px; }
.block .grid button { width: 24px; }
.block .grid .split { width: 34px; padding-left: 4px; }
.properties { width: 206px; }
.prop-rows { flex: 1; display: grid; grid-template-columns: 20px 1fr; grid-auto-rows: 20px; row-gap: 2px; align-items: center; align-content: start; padding-right: 2px; }
.swatch { width: 15px; height: 15px; margin: 0 8px 0 6px; background: #fff; border: 1px solid #39414e; }
.line { width: 60px; height: 1px; margin-right: 1px; margin-left: -2px; background: #e8eaec; }
.launcher { position: absolute; right: 2px; bottom: 5px; }
.groups { width: 64px; }
.groups .big { width: 40px; }
.groups .grid button { width: 22px; }
.groups .grid .active { background: #2f4b66; border: 1px solid #6fb4e2; }
.collapsed { flex-direction: column; justify-content: flex-start; flex: none; width: 56px; padding: 4px 0 5px; background: #4b5567; border: 1px solid #2b3340; }
.collapsed svg { width: 30px; height: 32px; }
.collapsed .caret { margin-top: auto; }

/* Document tabs */
.doc-tabs { display: flex; height: 28px; padding: 4px 0 0 21px; border-bottom: 2px solid #3b4453; color: #b4b9c1; }
.doc-tab {
  display: flex;
  align-items: center;
  justify-content: space-between;
  gap: 6px;
  min-width: 115px;
  padding: 0 11px 0 8px;
  background: #2c3541;
  clip-path: polygon(0 100%, 3px 60%, 5px 10%, 9px 0, calc(100% - 9px) 0, calc(100% - 5px) 10%, calc(100% - 3px) 60%, 100% 100%);
}
.doc-tab.current { background: #3b4453; color: #e8eaec; }
.doc-tab .close { color: #a4aab2; }
.doc-tab svg { width: 10px; height: 10px; }
.add-tab { width: 26px; margin-left: 4px; background: #2c3541; border-radius: 3px 8px 3px 8px; height: 18px; align-self: center; }

/* Drawing area */
.canvas { position: relative; flex: 1; min-height: 440px; overflow: hidden; background: #1f272f; }
.drawing { position: absolute; inset: 0; }
.view-label { position: absolute; left: 3px; top: 5px; color: #e8eaec; }
.ghost-menu { position: absolute; left: 623px; top: 108px; width: 160px; height: 21px; padding: 2px 30px; background: #4682aa44; color: #17222d; }
.cursor { position: absolute; left: 570px; top: 67px; }
.ucs { position: absolute; left: 0; bottom: 4px; }
.view-controls { position: absolute; right: 11px; top: 9px; display: flex; gap: 8px; color: #fff; }
.viewcube { position: absolute; right: 12px; top: 33px; width: 84px; height: 84px; font: bold 13px/16px "Liberation Sans", Arial, sans-serif; color: #cfd1d5; }
.viewcube span, .top { position: absolute; }
.n { left: 38px; top: -1px; }
.s { left: 38px; bottom: -2px; }
.w { left: 0; top: 34px; }
.e { right: 1px; top: 34px; }
.top { left: 26px; top: 26px; width: 32px; height: 32px; font-size: 9px; color: #3d444d; }
.wcs { position: absolute; right: 33px; top: 132px; width: 44px; height: 16px; gap: 5px; border-radius: 3px; background: #9b9fa8; color: #444b54; font: 10px/16px "Liberation Sans", Arial, sans-serif; }
.navbar { position: absolute; right: 4px; top: 172px; }
.share {
  position: absolute;
  right: 149px;
  bottom: 12px;
  display: flex;
  align-items: center;
  padding: 5px 9px;
  background: #f5f6f7;
  color: #333;
  box-shadow: 0 1px 3px #0008;
}
.grip { width: 5px; height: 12px; border: solid #b6b8ba; border-width: 0 1px; margin-right: 9px; }
.share p { margin: 0 3px 0 0; white-space: nowrap; }
.share button { width: 94px; height: 29px; border-radius: 4px; background: #196de0; color: #fff; font-weight: 600; }
.share a { margin-left: 9px; color: #3f7fdc; text-decoration: none; }

/* Command line */
.command { display: flex; align-items: center; height: 41px; padding: 1px 1px 1px 4px; border-top: 2px solid #3b4453; background: #2b3442; }
.dots { width: 6px; height: 16px; margin-right: 3px; background: radial-gradient(circle, #dfe1e4 1px, transparent 1px) 0 0 / 3px 3px; }
.command > button { margin-right: 10px; }
.command > button + button { margin-right: 5px; }
.command-box { flex: 1; display: flex; align-items: center; gap: 6px; height: 37px; padding-left: 4px; background: #fff; color: #666; }
.command-box input { flex: 1; font: italic 11px/16px "DejaVu Sans Mono", monospace; }
.command-box input::placeholder { color: #757575; opacity: 1; }

/* Status bar */
.statusbar { display: flex; justify-content: space-between; height: 27px; }
.layouts { display: flex; height: 16px; padding-left: 11px; color: #aeb3ba; }
.layouts button { width: 61px; background: #2c3541; clip-path: polygon(0 0, 100% 0, calc(100% - 6px) 100%, 6px 100%); }
.layouts .current { width: 54px; background: #3b4453; color: #fff; font-weight: 700; }
.layouts .plus { width: 28px; }
.modes { display: flex; gap: 3px; height: 24px; padding-top: 1px; }
.modes div { display: flex; background: #333c4a; }
.modes button { width: 22px; }
.modes svg { width: 16px; height: 16px; }
.modes .on { background: #5b8fc7; }
.modes .narrow { width: 15px; }
.modes .text { width: 44px; color: #e8eaec; }
.modes .scale { width: 32px; gap: 3px; }

/* Taskbar */
.taskbar { display: flex; height: 37px; background: linear-gradient(90deg, #3e3e3e 30%, #484848 50%, #434343 78%, #1d1b1c 90%); }
.start { width: 45px; background: #1b1a1b; }
.search { display: flex; align-items: center; gap: 8px; width: 322px; padding-left: 11px; background: #f0f0f0; border-bottom: 1px solid #999; }
.search input { flex: 1; font-size: 13px; }
.search input::placeholder { color: #333; opacity: 1; }
.apps { display: flex; }
.apps button { width: 46px; border-bottom: 2px solid transparent; }
.apps svg { width: 24px; height: 24px; }
.apps .running { border-bottom-color: #76b9ed; }
.apps .focused { background: #676767; }
.tray { display: flex; gap: 6px; margin-left: auto; }
.tray svg { width: 17px; height: 17px; }
.clock { margin-left: 8px; width: 54px; line-height: 16px; color: #fff; }
.notify { width: 50px; padding-left: 4px; margin-right: 2px; }
```
